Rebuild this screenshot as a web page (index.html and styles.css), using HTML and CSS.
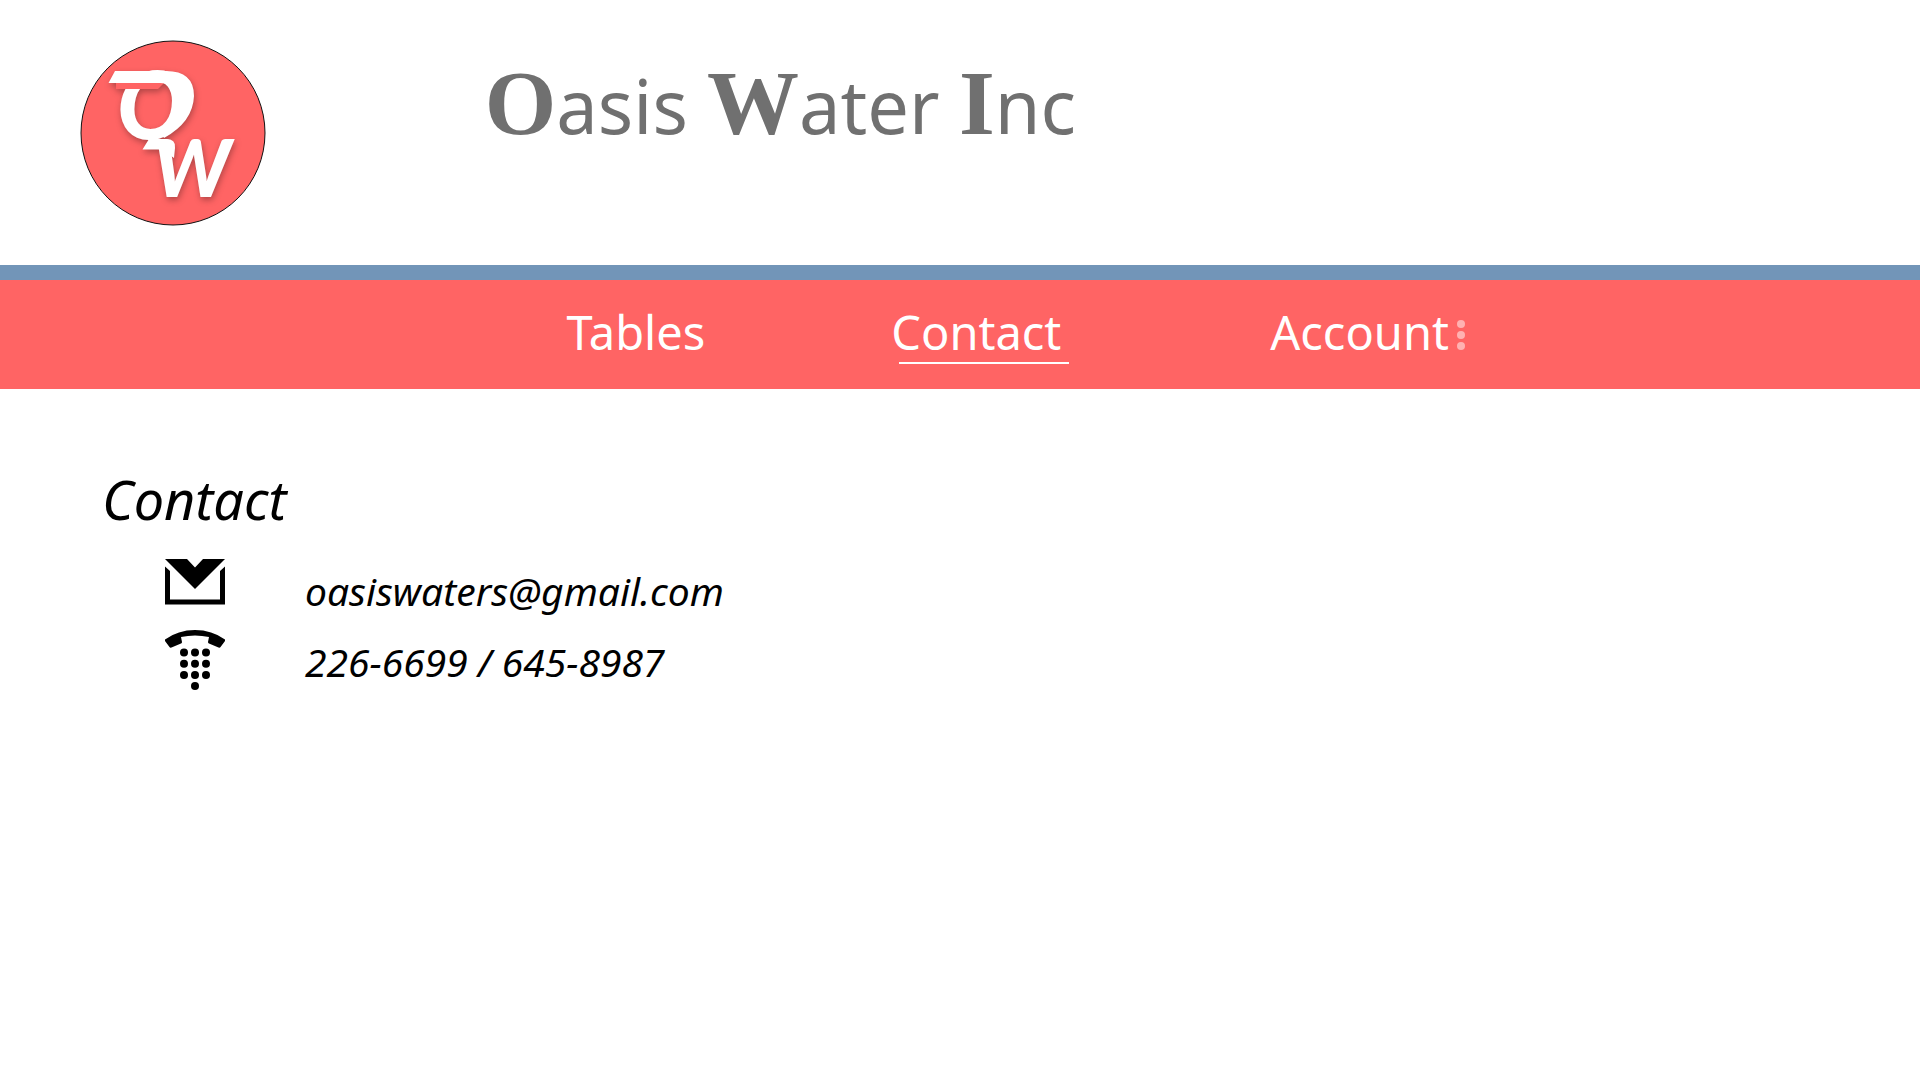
FILE: index.html
```html
<!DOCTYPE html>
<html lang="en">
<head>
<meta charset="utf-8">
<title>Oasis Water Inc</title>
<link rel="stylesheet" href="styles.css">
</head>
<body>
<header class="header">
  <a class="logo" href="#" aria-label="Home">
    <svg class="logo-mark" width="186" height="186" viewBox="0 0 186 186">
      <circle cx="93" cy="93" r="92" fill="#ff6464" stroke="#111"/>
      <g class="monogram">
        <text class="letter-o" x="37" y="99">O</text>
        <path class="gap" d="M36 43H84L78 49H36Z"/>
        <path d="M28.500 43L35 31H86Q114 31 114 56Q113 82 84 98L80 90Q96 72 95 56Q93 43 80 43Z"/>
        <path d="M62.500 109.500L69 99H86Q96 99 95 108L94 118L82 109.500Z"/>
        <text class="letter-w" x="73" y="157">W</text>
      </g>
    </svg>
  </a>
  <h1 class="title"><span class="cap">O</span>asis <span class="cap">W</span>ater <span class="cap">I</span>nc</h1>
</header>
<nav class="nav">
  <a class="nav-link" href="#">Tables</a>
  <a class="nav-link current" href="#" aria-current="page">Contact</a>
  <a class="nav-link" href="#">Account<svg class="dots" width="8" height="32" viewBox="0 0 8 32"><circle cx="4" cy="5" r="4"/><circle cx="4" cy="16" r="4"/><circle cx="4" cy="27" r="4"/></svg></a>
</nav>
<main class="content">
  <h2 class="heading">Contact</h2>
  <ul class="contacts">
    <li class="contact">
      <svg class="icon" width="60" height="60" viewBox="0 0 60 60">
        <path d="M0 0H22L30 8.500L38 0H60L30 30Z"/>
        <path d="M0 7.500L5 12V40.500H55V12L60 7.500V45.500H0Z"/>
      </svg>
      <span>oasiswaters@gmail.com</span>
    </li>
    <li class="contact">
      <svg class="icon" width="60" height="60" viewBox="0 0 60 60">
        <path d="M0 9.500Q13 0 30 0T60 9.500V11L55.500 17Q55 18 53.500 17.500L44 13.500Q43 13 43 12L44 7Q30 4 16 7L17 12Q17 13 16 13.500L6.500 17.500Q5 18 4.500 17L0 11Z"/>
        <circle cx="19" cy="22.500" r="4"/><circle cx="30" cy="22.500" r="4"/><circle cx="41" cy="22.500" r="4"/>
        <circle cx="19" cy="33.700" r="4"/><circle cx="30" cy="33.700" r="4"/><circle cx="41" cy="33.700" r="4"/>
        <circle cx="19" cy="45" r="4"/><circle cx="30" cy="45" r="4"/><circle cx="41" cy="45" r="4"/>
        <circle cx="30" cy="56" r="4"/>
      </svg>
      <span>226-6699 / 645-8987</span>
    </li>
  </ul>
</main>
</body>
</html>
```
FILE: styles.css
```css
* {
  box-sizing: border-box;
}

body {
  margin: 0;
  background: #fff;
  color: #000;
  font-family: "Noto Sans", "Open Sans", sans-serif;
}

.header {
  display: grid;
  grid-template-columns: 23% 1fr;
  padding: 40px 80px 39px;
  border-bottom: 15px solid #7295b8;
}

.logo,
.logo-mark {
  display: block;
}

.monogram {
  fill: #fff;
  font-family: Lato, "Liberation Sans", sans-serif;
  font-style: italic;
  font-weight: 900;
  filter: drop-shadow(1px 3px 3px rgba(0, 0, 0, 0.3));
}

.gap {
  fill: #ff6464;
}

.letter-o {
  font-size: 94px;
}

.letter-w {
  font-size: 80px;
}

.title {
  margin: 0;
  padding-top: 16px;
  color: #707070;
  font-size: 74px;
  font-weight: 400;
  line-height: 100px;
  white-space: nowrap;
}

.cap {
  font-family: "Liberation Serif", serif;
  font-size: 92px;
  font-weight: 700;
  line-height: 0;
}

.nav {
  display: grid;
  grid-template-columns: 24% 28% 1fr;
  justify-items: start;
  padding: 20px 0 25px 29.5%;
  background: #ff6464;
}

.nav-link {
  position: relative;
  display: flex;
  align-items: center;
  gap: 8px;
  color: #fff;
  font-size: 47px;
  line-height: 64px;
  text-decoration: none;
}

.current::after {
  content: "";
  position: absolute;
  top: 62px;
  left: 8px;
  width: 100%;
  height: 2px;
  background: #fff;
}

.dots {
  margin-top: 6px;
  fill: #ffb1b1;
}

.content {
  padding: 78px 102px;
}

.heading {
  margin: 0;
  font-size: 54px;
  font-style: italic;
  font-weight: 400;
  line-height: 64px;
}

.contacts {
  margin: 28px 0 0;
  padding: 0 0 0 63px;
  list-style: none;
}

.contact {
  display: flex;
  gap: 80px;
  height: 71px;
  font-size: 39px;
  font-style: italic;
  line-height: 64px;
}

.icon {
  flex: none;
}
```
